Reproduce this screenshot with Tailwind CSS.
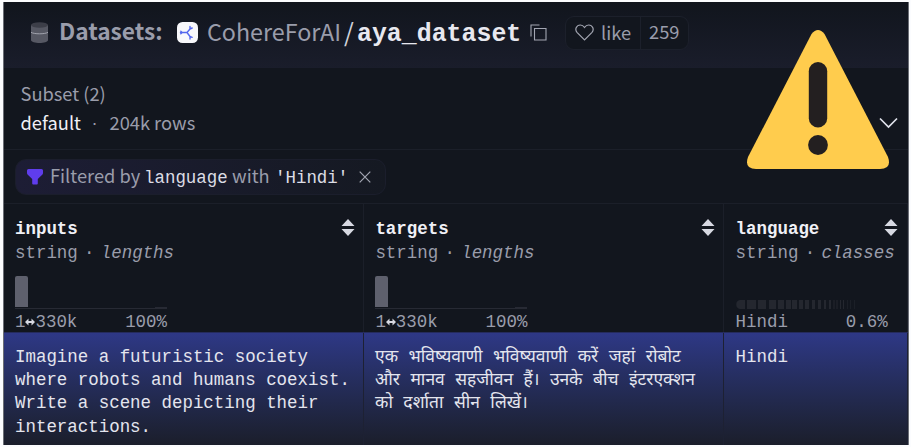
<!DOCTYPE html>
<html lang="en">
<head>
<meta charset="utf-8">
<title>aya_dataset</title>
<script src="https://cdn.jsdelivr.net/npm/@tailwindcss/browser@4"></script>
</head>
<body class="bg-[#fbfcfe] w-[911px] h-[447px] overflow-hidden font-['Noto_Sans_CJK_SC',sans-serif] text-[#9a9dab]">
<main class="relative ml-[3px] mt-[2px] w-[906px] h-[443px] bg-[#12161e] border-x border-[#6b6e76] overflow-hidden flex flex-col">
  <header class="h-[66px] shrink-0 pl-[27px] pb-[5px] flex items-center bg-linear-to-b from-[#11151d] to-[#1a1d2b] whitespace-nowrap">
    <svg class="w-[17px] h-[21px] shrink-0" viewBox="0 0 17 21"><path d="M0 3v15c0 4 17 4 17 0V3z" fill="#565863"/><ellipse cx="8.500" cy="3" rx="8.500" ry="2.800" fill="#3c3e48"/><path d="M0 10.300c3 2 14 2 17 0" fill="none" stroke="#a9abb5" stroke-width=".9"/></svg>
    <span class="ml-[11px] mb-[3px] w-[118px] text-[22.700px] leading-8 font-bold">Datasets:</span>
    <svg class="w-[21px] h-[21px] shrink-0" viewBox="0 0 21 21"><rect width="21" height="21" rx="5.500" fill="#f8f8fb"/><g fill="none" stroke="#5467ee" stroke-width="1.400" stroke-linecap="round" stroke-linejoin="round"><path d="M3.500 10.500h6.500l3-3.500V4.500M10 10.500l3 4V17M13 7l2.200-1M13 14.500l2.200.800M5.300 10.500L3.800 9.300M5.300 10.500l-1.500 1.300"/></g></svg>
    <span class="ml-[9px] mb-[3px] w-[137px] text-[23.300px] leading-8">CohereForAI</span>
    <span class="w-[13px] mb-[3px] text-[25px] leading-8 text-[#d0d2da]">/</span>
    <h1 class="w-[173px] mt-[2px] font-['Liberation_Mono',monospace] font-bold text-[24.900px] leading-8 text-[#e8e8ef]">aya_dataset</h1>
    <svg class="w-[17px] h-[17px] shrink-0" viewBox="0 0 17 17" fill="none" stroke="#a3a6b2" stroke-width="1.100"><path d="M4.500 4.500h11.500v11.500h-11.500zM1 12.500V1h8.500M1 1v3"/></svg>
    <div class="ml-[18px] w-[124px] h-[34px] rounded-[9px] border border-[#1c202b] bg-[#12161e] flex items-center text-[18.300px]">
      <svg class="ml-[9px] w-[19px] h-[17px] shrink-0" viewBox="0 0 19 17" fill="none" stroke="#a3a6b2" stroke-width="1.200"><path d="M9.500 15.800L2 8.300C-.500 5.500 1.500 1 5.300 1c1.800 0 3.200 1 4.200 2.500C10.500 2 11.900 1 13.700 1c3.800 0 5.800 4.500 3.300 7.300z"/></svg>
      <span class="ml-[7px] mb-[2px] w-[39px] leading-8">like</span>
      <span class="h-full flex items-center border-l border-[#1c202b] pl-[8px] pb-[2px]">259</span>
    </div>
  </header>

  <section class="h-[82px] shrink-0 pl-[16.500px] pr-[10px] pt-[11px] flex justify-between border-b border-[#1b1f29] text-[18.300px] leading-[29px]">
    <div>
      <div>Subset (2)</div>
      <div class="flex"><span class="w-[71px] text-[#f0f0f6]">default</span><span class="w-[18px] font-['Liberation_Sans',sans-serif]">·</span><span>204k rows</span></div>
    </div>
    <svg class="mt-[38px] w-[19px] h-[12px]" viewBox="0 0 19 12" fill="none" stroke="#dfe1ea" stroke-width="1.700"><path d="M1 1.500l8.500 8.500L18 1.500"/></svg>
  </section>

  <section class="h-[54px] shrink-0 pl-[11px] flex items-center border-b border-[#1b1f29]">
    <div class="w-[371px] h-[36px] rounded-[11px] bg-linear-to-r from-[#1d1d35] to-[#151922] border border-[#1b1e2c] flex items-center text-[18.300px] whitespace-nowrap">
      <svg class="ml-[11px] w-[16px] h-[16px] shrink-0" viewBox="0 0 16 16"><path d="M1.500 0h13q1.500 0 1.500 1.500V4q0 1-.800 1.800L10.800 10v4.500q0 1-1 1H6.200q-1 0-1-1V10L.800 5.800Q0 5 0 4V1.500Q0 0 1.500 0z" fill="#5f3dec"/></svg>
      <span class="ml-[7px] mb-[2px] w-[94px]">Filtered by</span>
      <code class="w-[88px] mt-[3px] font-['Liberation_Mono',monospace] text-[17.450px] text-[#dcdde5]">language</code>
      <span class="w-[43px] mb-[2px]">with</span>
      <code class="w-[84px] mt-[3px] font-['Liberation_Mono',monospace] text-[17.450px] text-[#dcdde5]">'Hindi'</code>
      <svg class="w-[12px] h-[12px] shrink-0" viewBox="0 0 12 12" stroke="#a3a6b2" stroke-width="1.200"><path d="M.7.700l10.600 10.600M11.300.700L.7 11.300"/></svg>
    </div>
  </section>

  <section class="grid grid-cols-[360px_360px_184px] h-[128px] shrink-0 font-['Liberation_Mono',monospace] text-[17.450px] leading-[24px]">
    <div class="border-r border-[#1b1f29] pl-[11px] pt-[13px]">
      <div class="flex justify-between pr-[8px]"><b class="text-[#f0f0f6]">inputs</b><svg class="mt-[2px] w-[14px] h-[17px]" viewBox="0 0 14 17" fill="#d7d9e2"><path d="M7 0l6.500 7H.5zM.5 10h13L7 17z"/></svg></div>
      <div class="whitespace-nowrap">string<span class="inline-block w-[23px] text-center">·</span><i>lengths</i></div>
      <div class="mt-[11px] w-[152px] h-[33px] flex items-end justify-between border-b border-[#272a34]"><span class="w-[13px] h-[31px] mb-px rounded-t-[2px] bg-[#5e606d]"></span><span class="w-[12px] h-px bg-[#272a34]"></span></div>
      <div class="flex justify-between w-[152px] pt-px"><span>1<svg class="inline-block align-middle w-[10px] h-[8px]" viewBox="0 0 10 8" fill="#d7d9e2"><path d="M0 4l3.500-3.500v2.500h3v-2.500L10 4 6.500 7.500v-2.500h-3v2.500z"/></svg>330k</span><span>100%</span></div>
    </div>
    <div class="border-r border-[#1b1f29] pl-[11.400px] pt-[13px]">
      <div class="flex justify-between pr-[8px]"><b class="text-[#f0f0f6]">targets</b><svg class="mt-[2px] w-[14px] h-[17px]" viewBox="0 0 14 17" fill="#d7d9e2"><path d="M7 0l6.500 7H.5zM.5 10h13L7 17z"/></svg></div>
      <div class="whitespace-nowrap">string<span class="inline-block w-[23px] text-center">·</span><i>lengths</i></div>
      <div class="mt-[11px] w-[152px] h-[33px] flex items-end justify-between border-b border-[#272a34]"><span class="w-[13px] h-[31px] mb-px rounded-t-[2px] bg-[#5e606d]"></span><span class="w-[12px] h-px bg-[#272a34]"></span></div>
      <div class="flex justify-between w-[152px] pt-px"><span>1<svg class="inline-block align-middle w-[10px] h-[8px]" viewBox="0 0 10 8" fill="#d7d9e2"><path d="M0 4l3.500-3.500v2.500h3v-2.500L10 4 6.500 7.500v-2.500h-3v2.500z"/></svg>330k</span><span>100%</span></div>
    </div>
    <div class="border-r border-[#1b1f29] pl-[11.600px] pt-[13px]">
      <div class="flex justify-between pr-[9px]"><b class="text-[#f0f0f6]">language</b><svg class="mt-[2px] w-[14px] h-[17px]" viewBox="0 0 14 17" fill="#d7d9e2"><path d="M7 0l6.500 7H.5zM.5 10h13L7 17z"/></svg></div>
      <div class="whitespace-nowrap">string<span class="inline-block w-[23px] text-center">·</span><i>classes</i></div>
      <div class="mt-[11px] w-[152px] h-[33px] flex items-end"><svg class="w-[124px] h-[9px]" viewBox="0 0 124 9" fill="#24272f"><path d="M4 0h5v9H4C-1 9-1 0 4 0zM11 0h9v9h-9zM22 0h8v9h-8zM33 0h7v9h-7zM42 0h6v9h-6zM50 0h5v9h-5zM56 0h5v9h-5zM63 0h4v9h-4zM69 0h4v9h-4zM76 0h3v9h-3zM82 0h3v9h-3zM88 0h2v9h-2zM93 0h2v9h-2z"/><path d="M97.500 0h1v9h-1zM100.500 0h1v9h-1zM104 0h1v9h-1zM107 0h1v9h-1z"/><path opacity=".5" d="M111 0h1v9h-1zM114 0h1v9h-1zM118 0h1v9h-1z"/></svg></div>
      <div class="flex justify-between w-[152px] pt-px"><span>Hindi</span><span>0.6%</span></div>
    </div>
  </section>

  <section class="grid grid-cols-[360px_360px_184px] grow font-['Liberation_Mono','Noto_Sans_Devanagari',sans-serif] text-[17.450px] leading-[23.400px] text-[#e4e5ee] bg-linear-to-b from-[#2e3886] to-[#1b1e2b] border-t border-[#252b5c]">
    <p class="border-r border-[#1d2133] pl-[11px] pt-[12.500px] whitespace-nowrap">Imagine a futuristic society<br>where robots and humans coexist.<br>Write a scene depicting their<br>interactions.</p>
    <p lang="hi" class="border-r border-[#1d2133] pl-[11px] pt-[12.500px] whitespace-nowrap">एक भविष्यवाणी भविष्यवाणी करें जहां रोबोट<br>और मानव सहजीवन हैं। उनके बीच इंटरएक्शन<br>को दर्शाता सीन लिखें।</p>
    <p class="border-r border-[#1d2133] pl-[11.600px] pt-[12.500px]">Hindi</p>
  </section>

  <svg class="absolute left-[743px] top-[28px] w-[142px] h-[139px]" viewBox="0 0 142 139"><path d="M64.500 4Q71-4 77.500 4L141 127Q145 139 133 139H9Q-3 139 1 127z" fill="#ffcc4d"/><rect x="61.800" y="32" width="18.400" height="65.500" rx="9.200" fill="#231f20"/><circle cx="71" cy="115" r="9.900" fill="#231f20"/></svg>
</main>
</body>
</html>
